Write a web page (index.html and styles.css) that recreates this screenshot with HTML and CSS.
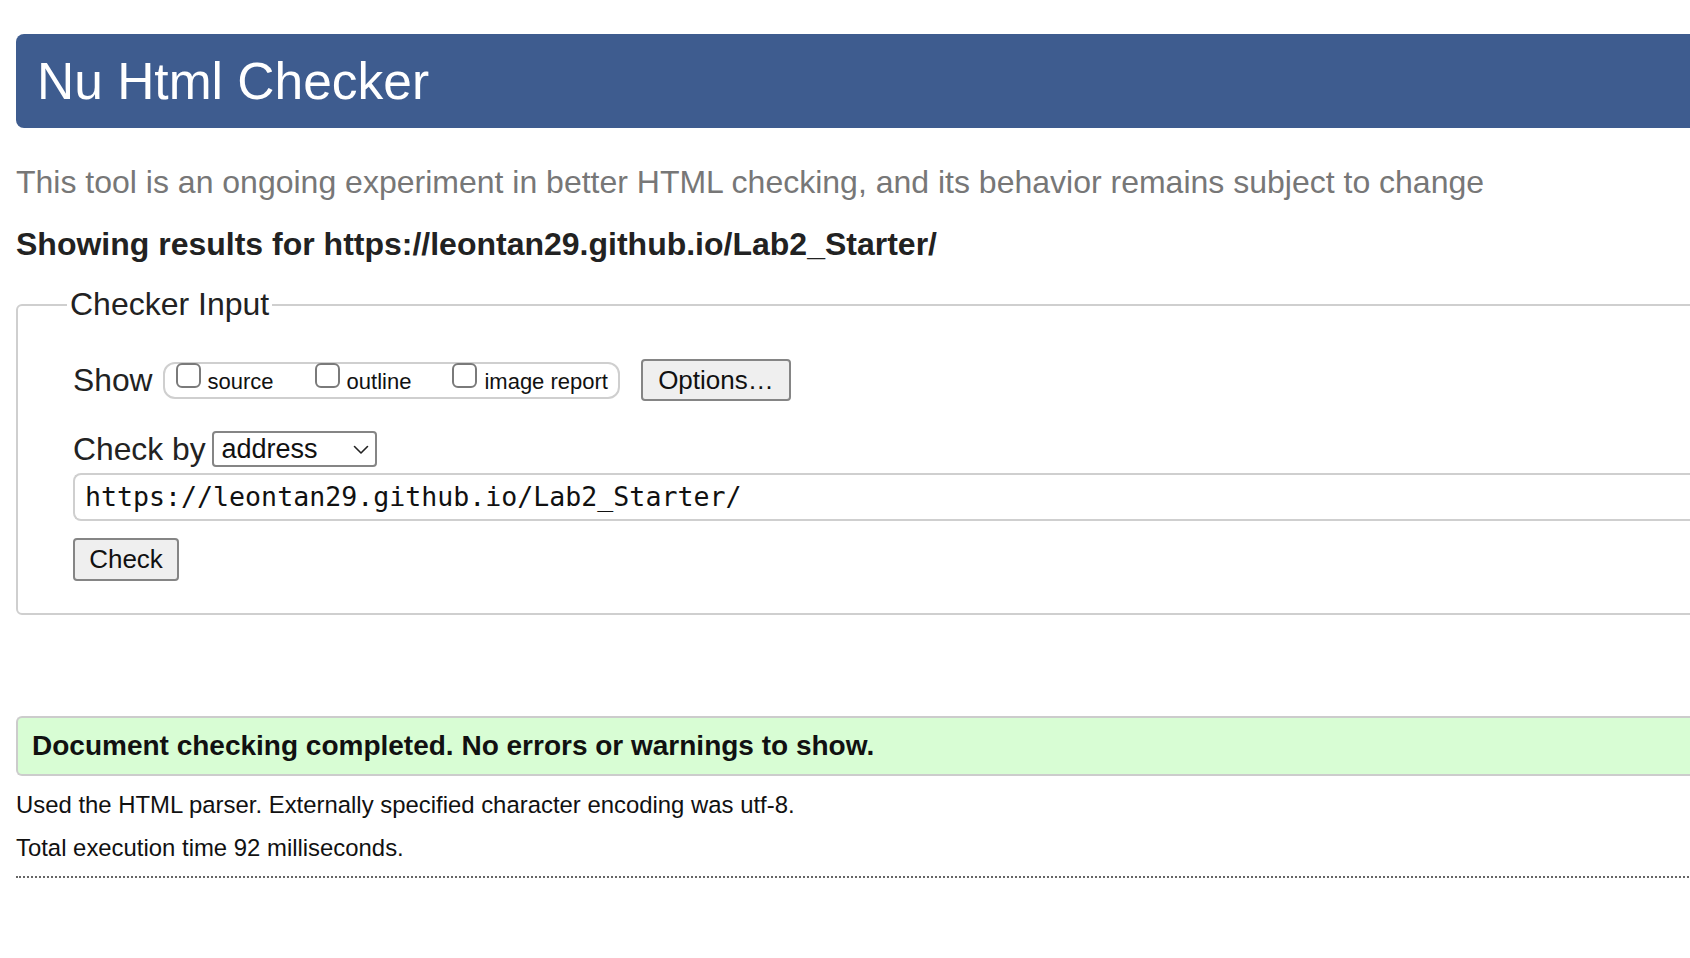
FILE: index.html
```html
<!DOCTYPE html>
<html lang="en">
<head>
<meta charset="utf-8">
<title>Nu Html Checker</title>
<link rel="stylesheet" href="styles.css">
</head>
<body>
<div class="page">
  <header class="site-header"><h1 class="title">Nu Html Checker</h1></header>
  <p class="intro">This tool is an ongoing experiment in better HTML checking, and its behavior remains subject to change</p>
  <p class="showing">Showing results for https://leontan29.github.io/Lab2_Starter/</p>
  <form class="checker-form">
    <fieldset class="checker">
      <legend class="legend">Checker Input</legend>
      <div class="row show-row">
        <span class="lbl">Show</span>
        <span class="group">
          <span class="opt"><span class="cb"></span><span class="opt-text">source</span></span>
          <span class="opt"><span class="cb"></span><span class="opt-text">outline</span></span>
          <span class="opt"><span class="cb"></span><span class="opt-text">image report</span></span>
        </span>
        <span class="btn options">Options…</span>
      </div>
      <div class="row by-row">
        <span class="lbl">Check by</span>
        <span class="select"><span class="select-text">address</span><svg class="chev" width="16" height="10" viewBox="0 0 16 10"><path d="M1.5 1.5 L8 8 L14.5 1.5" fill="none" stroke="#222" stroke-width="1.6" stroke-linecap="round" stroke-linejoin="round"/></svg></span>
      </div>
      <div class="url">https://leontan29.github.io/Lab2_Starter/</div>
      <span class="btn check">Check</span>
    </fieldset>
  </form>
  <div class="success">Document checking completed. No errors or warnings to show.</div>
  <p class="details first">Used the HTML parser. Externally specified character encoding was utf-8.</p>
  <p class="details second">Total execution time 92 milliseconds.</p>
  <div class="dotted"></div>
</div>
</body>
</html>
```
FILE: styles.css
```css
html, body {
  margin: 0;
  padding: 0;
  overflow: hidden;
  background: #fff;
}
body {
  font-family: "Liberation Sans", Arial, sans-serif;
  color: #222;
}
.page {
  width: 2000px;
  padding: 34px 0 0 16px;
}
.site-header {
  background: #3e5c8f;
  border-radius: 8px 0 0 8px;
  height: 94px;
  box-sizing: border-box;
  padding: 0 0 0 21px;
}
.title {
  margin: 0;
  font-weight: normal;
  font-size: 51.5px;
  line-height: 94px;
  color: #fff;
  position: relative;
  top: 0;
}
.intro {
  margin: 36px 0 0 0;
  font-size: 32px;
  line-height: 36px;
  color: #777;
}
.showing {
  margin: 26px 0 0 0;
  font-size: 32px;
  line-height: 36px;
  font-weight: bold;
  color: #222;
}
.checker-form {
  margin: 24px 0 0 0;
}
.checker {
  margin: 0;
  border: 2px solid #cfcfcf;
  border-radius: 6px;
  padding: 36px 0 32px 55px;
}
.legend {
  font-size: 32px;
  line-height: 37px;
  padding: 0 3px;
  margin-left: -6px;
  color: #222;
}
.row {
  display: flex;
  align-items: center;
}
.show-row {
  height: 42px;
}
.lbl {
  font-size: 31.8px;
  line-height: 36px;
  color: #222;
}
.group {
  margin-left: 10px;
  height: 37px;
  box-sizing: border-box;
  border: 2px solid #cfcfcf;
  border-radius: 12px;
  padding: 0 10px 0 11px;
  display: flex;
  align-items: flex-start;
}
.opt {
  display: flex;
  align-items: flex-start;
  margin-right: 41px;
}
.opt:last-child {
  margin-right: 0;
}
.cb {
  width: 25px;
  height: 25px;
  box-sizing: border-box;
  margin-top: -1px;
  border: 2px solid #7a7a7a;
  border-radius: 6px;
  background: #fff;
}
.opt-text {
  margin-left: 7px;
  padding-top: 5px;
  font-size: 22px;
  line-height: 26px;
  color: #111;
}
.btn {
  display: inline-flex;
  align-items: center;
  justify-content: center;
  box-sizing: border-box;
  background: #efefef;
  border: 2px solid #858585;
  border-radius: 4px;
  font-size: 26px;
  color: #111;
}
.options {
  margin-left: 21px;
  height: 42px;
  width: 150px;
}
.by-row {
  margin-top: 30px;
  height: 36px;
}
.select {
  margin-left: 6px;
  width: 165px;
  height: 36px;
  box-sizing: border-box;
  border: 2px solid #858585;
  border-radius: 4px;
  display: flex;
  align-items: center;
  padding: 0 6px 0 8px;
  font-size: 27px;
  color: #111;
}
.select-text {
  flex: 1;
}
.chev {
  display: block;
  margin-top: 2px;
}
.url {
  margin-top: 6px;
  height: 48px;
  box-sizing: border-box;
  border: 2px solid #cfcfcf;
  border-right: none;
  border-radius: 8px 0 0 8px;
  padding-left: 10px;
  font-family: "DejaVu Sans Mono", monospace;
  font-size: 26.6px;
  line-height: 44px;
  color: #111;
}
.check {
  margin-top: 17px;
  width: 106px;
  height: 43px;
}
.success {
  margin-top: 101px;
  height: 60px;
  box-sizing: border-box;
  border: 2px solid #cccccc;
  border-right: none;
  border-radius: 6px 0 0 6px;
  background: #d8fdd4;
  padding-left: 14px;
  font-size: 28px;
  font-weight: bold;
  line-height: 56px;
  color: #111;
}
.details {
  margin: 0;
  font-size: 23.9px;
  line-height: 37px;
  color: #111;
}
.details.first {
  padding-top: 10px;
}
.details.second {
  padding-top: 6px;
}
.dotted {
  margin-top: 10px;
  border-top: 2px dotted #666;
}
```
